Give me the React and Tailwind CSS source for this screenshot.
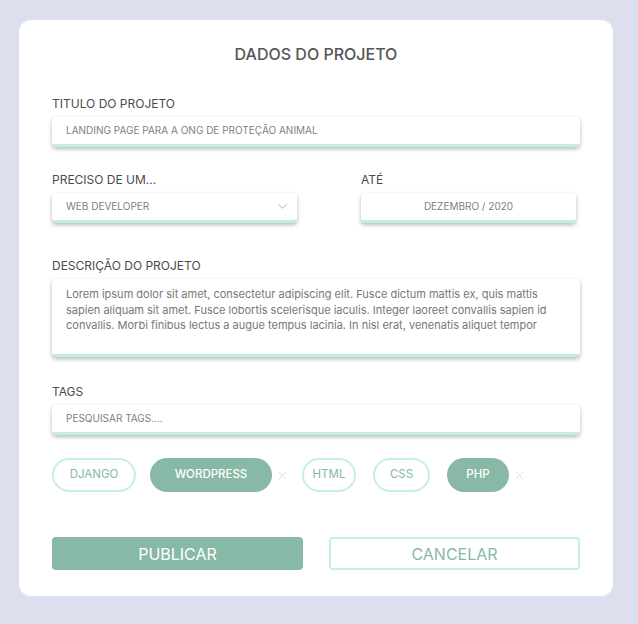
import { ChevronDown, X } from 'lucide-react'

const font = { fontFamily: 'Inter, "Open Sans", sans-serif' }

function Field({ label, children, className = '' }) {
  return (
    <div className={className}>
      <div className="text-[12px] leading-[14px] text-[#4a4a4a] mb-[6px]">{label}</div>
      {children}
    </div>
  )
}

function Box({ children, className = '' }) {
  return (
    <div
      className={`bg-white rounded-[4px] border-b-[3px] border-[#c3eedf] shadow-[0_2px_4px_rgba(0,0,0,0.28)] ${className}`}
    >
      {children}
    </div>
  )
}

function Tag({ name, active, width }) {
  if (active) {
    return (
      <div className="flex items-center">
        <span
          className={`h-[34px] flex items-center justify-center rounded-full bg-[#88b8a6] text-white text-[11.5px] font-medium ${width}`}
        >
          {name}
        </span>
        <X size={13} strokeWidth={1.5} className="text-[#cfd3ea] ml-[4px]" />
      </div>
    )
  }
  return (
    <span
      className={`h-[34px] flex items-center justify-center rounded-full border-2 border-[#c6f0e3] text-[#88b8a6] text-[11.5px] ${width}`}
    >
      {name}
    </span>
  )
}

export default function App() {
  return (
    <div className="min-h-[624px] bg-[#dcdfee] pt-[20px] px-[19px]" style={font}>
      <div className="w-[594px] h-[576px] bg-white rounded-[12px] px-[33px] pt-[24px]">
        <h1 className="text-center text-[16px] leading-[20px] text-[#555] font-medium">DADOS DO PROJETO</h1>

        <Field label="TITULO DO PROJETO" className="mt-[33px]">
          <Box className="h-[30px] flex items-center px-[14px]">
            <span className="text-[10px] text-[#808080]">LANDING PAGE PARA A ONG DE PROTEÇÃO ANIMAL</span>
          </Box>
        </Field>

        <div className="flex justify-between mt-[26px]">
          <Field label="PRECISO DE UM..." className="w-[245px]">
            <Box className="h-[30px] flex items-center justify-between pl-[14px] pr-[7px]">
              <span className="text-[10px] text-[#808080]">WEB DEVELOPER</span>
              <ChevronDown size={15} strokeWidth={1.2} className="text-[#999]" />
            </Box>
          </Field>
          <Field label="ATÉ" className="w-[215px] mr-[4px]">
            <Box className="h-[30px] flex items-center justify-center">
              <span className="text-[10px] text-[#808080]">DEZEMBRO / 2020</span>
            </Box>
          </Field>
        </div>

        <Field label="DESCRIÇÃO DO PROJETO" className="mt-[36px]">
          <Box className="h-[78px] px-[14px] pt-[8px]">
            <p className="text-[11px] leading-[15.5px] text-[#777]">
              Lorem ipsum dolor sit amet, consectetur adipiscing elit. Fusce dictum mattis ex, quis mattis sapien aliquam
              sit amet. Fusce lobortis scelerisque iaculis. Integer laoreet convallis sapien id convallis. Morbi finibus
              lectus a augue tempus lacinia. In nisl erat, venenatis aliquet tempor
            </p>
          </Box>
        </Field>

        <Field label="TAGS" className="mt-[28px]">
          <Box className="h-[30px] flex items-center px-[14px]">
            <span className="text-[10px] text-[#808080]">PESQUISAR TAGS....</span>
          </Box>
        </Field>

        <div className="flex items-center mt-[23px]">
          <Tag name="DJANGO" width="w-[84px]" />
          <div className="ml-[14px]">
            <Tag name="WORDPRESS" active width="w-[122px]" />
          </div>
          <div className="ml-[13px]">
            <Tag name="HTML" width="w-[54px]" />
          </div>
          <div className="ml-[17px]">
            <Tag name="CSS" width="w-[57px]" />
          </div>
          <div className="ml-[17px]">
            <Tag name="PHP" active width="w-[62px]" />
          </div>
        </div>

        <div className="flex justify-between mt-[45px]">
          <button className="w-[251px] h-[33px] rounded-[4px] bg-[#88b8a6] text-white text-[16px]">PUBLICAR</button>
          <button className="w-[251px] h-[33px] rounded-[4px] border-2 border-[#c6f0e3] text-[#88b8a6] text-[16px]">
            CANCELAR
          </button>
        </div>
      </div>
    </div>
  )
}
